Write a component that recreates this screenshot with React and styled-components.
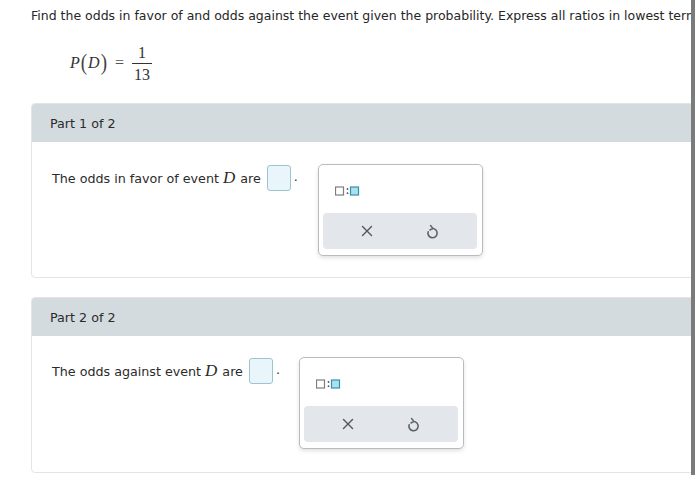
import React from "react";
import styled, { createGlobalStyle } from "styled-components";

const Global = createGlobalStyle`
  html, body { margin: 0; padding: 0; background: #fff; }
  body { font-family: "DejaVu Sans", Verdana, sans-serif; color: #2b2b2b; }
`;

const Page = styled.div`
  display: flex;
  width: 700px;
  height: 477px;
  overflow: hidden;
`;

const Content = styled.div`
  width: 660px;
  flex: none;
  overflow: hidden;
  padding-left: 31px;
`;

const Bar = styled.div`
  width: 4px;
  height: 475px;
  background: #7b7b7b;
  flex: none;
`;

const Prompt = styled.p`
  margin: 0;
  padding-top: 8px;
  font-size: 12.5px;
  line-height: 15px;
  white-space: nowrap;
  color: #262626;
`;

const Formula = styled.div`
  display: flex;
  align-items: center;
  margin: 20px 0 0 39px;
  height: 40px;
  font-family: "Liberation Serif", "Times New Roman", serif;
  font-size: 16px;
  color: #333;
`;

const Ital = styled.span`
  font-style: italic;
`;

const Paren = styled.span`
  font-size: 19px;
  display: inline-block;
  transform: scaleY(1.2);
  margin: 0 1px;
  color: #444;
`;

const Eq = styled.span`
  margin: 0 8px 0 7px;
  color: #555;
`;

const Frac = styled.span`
  display: inline-flex;
  flex-direction: column;
  align-items: center;
  line-height: 15px;
`;

const Num = styled.span`
  padding: 0 2px 3px;
  border-bottom: 1px solid #333;
  align-self: stretch;
  text-align: center;
`;

const Den = styled.span`
  padding: 3px 2px 0;
`;

const Card = styled.section`
  margin-top: ${(p) => p.$top}px;
  margin-right: -30px;
  border: 1px solid #e2e4e6;
  border-radius: 4px;
  background: #fff;
`;

const Header = styled.div`
  height: 38px;
  display: flex;
  align-items: center;
  padding-left: 18px;
  background: #d3dbdf;
  font-size: 12.7px;
  color: #2b2b2b;
  border-radius: 3px 3px 0 0;
`;

const Body = styled.div`
  display: flex;
  align-items: flex-start;
  padding: ${(p) => p.$padTop}px 0 ${(p) => p.$bottom}px 20px;
`;

const Sentence = styled.div`
  display: flex;
  align-items: center;
  height: 28px;
  font-size: 12.7px;
  color: #2b2b2b;
`;

const MathD = styled.span`
  font-family: "Liberation Serif", "Times New Roman", serif;
  font-style: italic;
  font-size: 17px;
  margin: 0 5px 0 4px;
`;

const InputBox = styled.span`
  display: inline-block;
  width: 22px;
  height: 24px;
  margin-left: 6px;
  border: 1px solid #9fc3d0;
  border-radius: 3px;
  background: #e8f5fa;
`;

const Dot = styled.span`
  margin-left: 3px;
  align-self: flex-end;
  padding-bottom: 8px;
`;

const Popup = styled.div`
  margin-left: ${(p) => p.$gap}px;
  width: 165px;
  height: 92px;
  border: 1px solid #b9bcbf;
  border-radius: 5px;
  background: #fff;
  box-shadow: 0 2px 4px rgba(0, 0, 0, 0.12);
  display: flex;
  flex-direction: column;
  padding: 0 5px 6px 4px;
  box-sizing: border-box;
`;

const Template = styled.div`
  flex: 1;
  display: flex;
  align-items: center;
  padding-left: 12px;
  padding-top: 3px;
`;

const Tray = styled.div`
  height: 36px;
  border-radius: 4px;
  background: #e3e7eb;
  display: flex;
  align-items: center;
  justify-content: space-around;
  padding: 0 12px;
`;

const IconBtn = styled.span`
  width: 24px;
  height: 24px;
  display: flex;
  align-items: center;
  justify-content: center;
  color: #555c63;
`;

const RatioIcon = () => (
  <svg width="25" height="10" viewBox="0 0 25 10">
    <rect x="0.5" y="1" width="8" height="8" fill="#fff" stroke="#7d7d7d" strokeWidth="1.2" />
    <circle cx="12.5" cy="3" r="0.9" fill="#555" />
    <circle cx="12.5" cy="7.2" r="0.9" fill="#555" />
    <rect x="15.5" y="1" width="8" height="8" fill="#a8e2f2" stroke="#3a8fab" strokeWidth="1.2" />
  </svg>
);

const XIcon = () => (
  <svg width="12" height="12" viewBox="0 0 12 12">
    <path d="M1.5 1.5 L10.5 10.5 M10.5 1.5 L1.5 10.5" stroke="#4f565c" strokeWidth="1.4" strokeLinecap="round" />
  </svg>
);

const UndoIcon = () => (
  <svg width="13" height="15" viewBox="0 0 12 14">
    <path
      d="M6 4.2 A4.3 4.3 0 1 1 1.9 7.3"
      fill="none"
      stroke="#5b646c"
      strokeWidth="1.5"
      strokeLinecap="round"
    />
    <path d="M4.2 1.4 L6.4 4.1 L3.6 5.6" fill="none" stroke="#5b646c" strokeWidth="1.4" strokeLinecap="round" strokeLinejoin="round" />
  </svg>
);

const Part = ({ title, lead, top, padTop, bottom, gap }) => (
  <Card $top={top}>
    <Header>{title}</Header>
    <Body $padTop={padTop} $bottom={bottom}>
      <Sentence>
        {lead}
        <MathD>D</MathD>are
        <InputBox />
        <Dot>.</Dot>
      </Sentence>
      <Popup $gap={gap}>
        <Template>
          <RatioIcon />
        </Template>
        <Tray>
          <IconBtn>
            <XIcon />
          </IconBtn>
          <IconBtn>
            <UndoIcon />
          </IconBtn>
        </Tray>
      </Popup>
    </Body>
  </Card>
);

export default function App() {
  return (
    <>
      <Global />
      <Page>
        <Content>
          <Prompt>
            Find the odds in favor of and odds against the event given the probability. Express all ratios in lowest terms.
          </Prompt>
          <Formula>
            <Ital>P</Ital>
            <Paren>(</Paren>
            <Ital>D</Ital>
            <Paren>)</Paren>
            <Eq>=</Eq>
            <Frac>
              <Num>1</Num>
              <Den>13</Den>
            </Frac>
          </Formula>
          <Part title="Part 1 of 2" lead="The odds in favor of event" top={20} padTop={22} bottom={21} gap={20} />
          <Part title="Part 2 of 2" lead="The odds against event" top={19} padTop={21} bottom={23} gap={19} />
        </Content>
        <Bar />
      </Page>
    </>
  );
}
